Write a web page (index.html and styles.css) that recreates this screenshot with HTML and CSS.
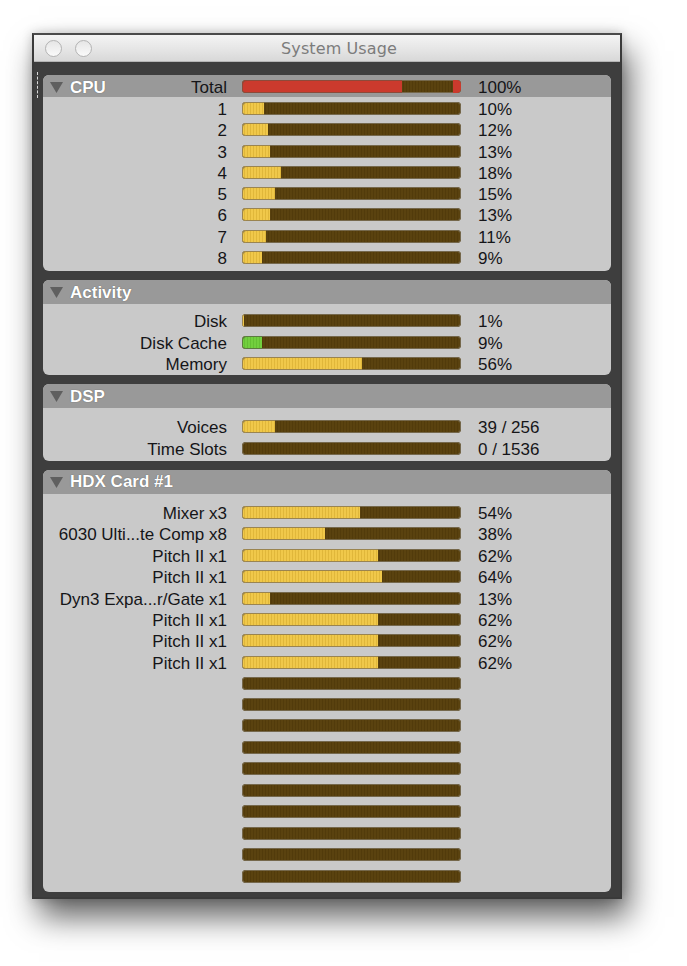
FILE: index.html
```html
<!DOCTYPE html>
<html>
<head>
<meta charset="utf-8">
<link rel="stylesheet" href="styles.css">
</head>
<body>
<div class="window">
  <div class="titlebar">
    <div class="lights"><span class="light"></span><span class="light"></span></div>
    <div class="title">System Usage</div>
  </div>
  <div class="content">
    <span class="grip"></span>
    <section class="panel">
      <div class="row head-row">
        <div class="label split"><span class="head-title"><svg class="tri" viewBox="0 0 13 11"><polygon points="0,0 13,0 6.5,11"/></svg>CPU</span><span>Total</span></div>
        <div class="bar"><div class="fill red" style="width:73%"></div><div class="peak"></div></div>
        <div class="pct">100%</div>
      </div>
      <div class="body cpu-body">
        <div class="row"><div class="label">1</div><div class="bar"><div class="fill" style="width:10%"></div></div><div class="pct">10%</div></div>
        <div class="row"><div class="label">2</div><div class="bar"><div class="fill" style="width:12%"></div></div><div class="pct">12%</div></div>
        <div class="row"><div class="label">3</div><div class="bar"><div class="fill" style="width:13%"></div></div><div class="pct">13%</div></div>
        <div class="row"><div class="label">4</div><div class="bar"><div class="fill" style="width:18%"></div></div><div class="pct">18%</div></div>
        <div class="row"><div class="label">5</div><div class="bar"><div class="fill" style="width:15%"></div></div><div class="pct">15%</div></div>
        <div class="row"><div class="label">6</div><div class="bar"><div class="fill" style="width:13%"></div></div><div class="pct">13%</div></div>
        <div class="row"><div class="label">7</div><div class="bar"><div class="fill" style="width:11%"></div></div><div class="pct">11%</div></div>
        <div class="row"><div class="label">8</div><div class="bar"><div class="fill" style="width:9%"></div></div><div class="pct">9%</div></div>
      </div>
    </section>

    <section class="panel">
      <div class="head"><span class="head-title"><svg class="tri" viewBox="0 0 13 11"><polygon points="0,0 13,0 6.5,11"/></svg>Activity</span></div>
      <div class="body activity-body">
        <div class="row"><div class="label">Disk</div><div class="bar"><div class="fill" style="width:1%"></div></div><div class="pct">1%</div></div>
        <div class="row"><div class="label">Disk Cache</div><div class="bar"><div class="fill green" style="width:9%"></div></div><div class="pct">9%</div></div>
        <div class="row"><div class="label">Memory</div><div class="bar"><div class="fill" style="width:55%"></div></div><div class="pct">56%</div></div>
      </div>
    </section>

    <section class="panel">
      <div class="head"><span class="head-title"><svg class="tri" viewBox="0 0 13 11"><polygon points="0,0 13,0 6.5,11"/></svg>DSP</span></div>
      <div class="body dsp-body">
        <div class="row"><div class="label">Voices</div><div class="bar"><div class="fill" style="width:15%"></div></div><div class="pct">39 / 256</div></div>
        <div class="row"><div class="label">Time Slots</div><div class="bar"></div><div class="pct">0 / 1536</div></div>
      </div>
    </section>

    <section class="panel grow">
      <div class="head"><span class="head-title"><svg class="tri" viewBox="0 0 13 11"><polygon points="0,0 13,0 6.5,11"/></svg>HDX Card #1</span></div>
      <div class="body hdx-body">
        <div class="row"><div class="label">Mixer x3</div><div class="bar"><div class="fill" style="width:54%"></div></div><div class="pct">54%</div></div>
        <div class="row"><div class="label">6030 Ulti...te Comp x8</div><div class="bar"><div class="fill" style="width:38%"></div></div><div class="pct">38%</div></div>
        <div class="row"><div class="label">Pitch II x1</div><div class="bar"><div class="fill" style="width:62%"></div></div><div class="pct">62%</div></div>
        <div class="row"><div class="label">Pitch II x1</div><div class="bar"><div class="fill" style="width:64%"></div></div><div class="pct">64%</div></div>
        <div class="row"><div class="label">Dyn3 Expa...r/Gate x1</div><div class="bar"><div class="fill" style="width:13%"></div></div><div class="pct">13%</div></div>
        <div class="row"><div class="label">Pitch II x1</div><div class="bar"><div class="fill" style="width:62%"></div></div><div class="pct">62%</div></div>
        <div class="row"><div class="label">Pitch II x1</div><div class="bar"><div class="fill" style="width:62%"></div></div><div class="pct">62%</div></div>
        <div class="row"><div class="label">Pitch II x1</div><div class="bar"><div class="fill" style="width:62%"></div></div><div class="pct">62%</div></div>
        <div class="row"><div class="label"></div><div class="bar"></div><div class="pct"></div></div>
        <div class="row"><div class="label"></div><div class="bar"></div><div class="pct"></div></div>
        <div class="row"><div class="label"></div><div class="bar"></div><div class="pct"></div></div>
        <div class="row"><div class="label"></div><div class="bar"></div><div class="pct"></div></div>
        <div class="row"><div class="label"></div><div class="bar"></div><div class="pct"></div></div>
        <div class="row"><div class="label"></div><div class="bar"></div><div class="pct"></div></div>
        <div class="row"><div class="label"></div><div class="bar"></div><div class="pct"></div></div>
        <div class="row"><div class="label"></div><div class="bar"></div><div class="pct"></div></div>
        <div class="row"><div class="label"></div><div class="bar"></div><div class="pct"></div></div>
        <div class="row"><div class="label"></div><div class="bar"></div><div class="pct"></div></div>
      </div>
    </section>
  </div>
</div>
</body>
</html>
```
FILE: styles.css
```css
* { box-sizing: border-box; }
html, body { margin: 0; padding: 0; background: #ffffff; }
body {
  font-family: "Liberation Sans", Arial, sans-serif;
  font-size: 17px;
  color: #151518;
  padding: 33px 0 0 32px;
  height: 966px;
  overflow: hidden;
}

.window {
  width: 590px;
  height: 866px;
  display: flex;
  flex-direction: column;
  background: #3e3e3e;
  border: 2px solid #3a3a3a;
  border-top-color: #4a4a4a;
  box-shadow: 7px 18px 30px rgba(0,0,0,0.62), 0 0 10px rgba(0,0,0,0.2);
}

.titlebar {
  height: 27px;
  flex: none;
  display: flex;
  align-items: center;
  background: linear-gradient(#f4f4f4, #e4e4e4 60%, #d8d8d8);
  border-bottom: 1px solid #b5b5b5;
  position: relative;
}
.lights { display: flex; gap: 13px; padding-left: 11px; }
.light {
  width: 17px; height: 17px; border-radius: 50%;
  border: 1.5px solid #b3b3b3;
  background: linear-gradient(#e6e6e6, #fafafa);
}
.title {
  flex: 1;
  text-align: center;
  padding-right: 34px;
  font-family: "DejaVu Sans", sans-serif;
  font-size: 16px;
  color: #7c7c7c;
  letter-spacing: 0.1px;
}

.content {
  flex: 1;
  display: flex;
  flex-direction: column;
  gap: 9px;
  padding: 13px 9px 6px 9px;
  position: relative;
}
.grip {
  position: absolute;
  left: 3px; top: 10px;
  height: 26px;
  border-left: 1px dashed #d8d8d8;
}

.panel {
  background: #c9c9c9;
  border-radius: 6px;
  overflow: hidden;
}
.panel.grow { flex: 1; }

.head {
  height: 24px;
  background: #999999;
  display: flex;
  align-items: center;
  padding-left: 7px;
  padding-top: 1px;
}
.head-title {
  display: flex;
  align-items: center;
  color: #ffffff;
  font-weight: bold;
  text-shadow: 0 0 1px rgba(0,0,0,0.5);
}
.tri { width: 13px; height: 11px; margin-right: 7px; fill: #5f5f5f; }

.row {
  display: grid;
  grid-template-columns: 184px 219px auto;
  column-gap: 15px;
  align-items: center;
  height: 21.3px;
  line-height: 21px;
  white-space: nowrap;
}
.row > .label, .row > .pct { padding-top: 2px; }
.head-row { background: #999999; height: 22px; }
.label { text-align: right; }
.label.split {
  display: flex;
  justify-content: space-between;
  padding-left: 7px;
}
.pct { padding-left: 2px; }

.body { padding-bottom: 5px; }
.cpu-body { padding-bottom: 4px; }
.activity-body { padding-top: 5px; padding-bottom: 2px; }
.dsp-body { padding-top: 7px; padding-bottom: 3px; }
.hdx-body { padding-top: 7px; }
.hdx-body .row { height: 21.45px; }

.bar {
  position: relative;
  height: 13px;
  border-radius: 4px;
  overflow: hidden;
  background: repeating-linear-gradient(90deg, #5a420f 0 2px, #523b0b 2px 3px);
  box-shadow: inset 0 0 0 1px #75684c;
}
.fill {
  height: 100%;
  border-radius: 4px 0 0 4px;
  background: repeating-linear-gradient(90deg, #f0c84a 0 2px, #e0b73a 2px 3px);
  box-shadow: inset 1px 1px 0 #9a8450, inset 0 -1px 0 #9a8450;
}
.fill.red {
  background: #cb3a2d;
  box-shadow: inset 1px 1px 0 #8c4a3a, inset 0 -1px 0 #8c4a3a;
}
.fill.green {
  background: repeating-linear-gradient(90deg, #72cf3e 0 2px, #64c034 2px 3px);
  box-shadow: inset 1px 1px 0 #5c7a40, inset 0 -1px 0 #5c7a40;
}
.peak {
  position: absolute;
  right: 0; top: 0;
  width: 8px; height: 13px;
  background: #cb3a2d;
  border-radius: 0 4px 4px 0;
}
```
